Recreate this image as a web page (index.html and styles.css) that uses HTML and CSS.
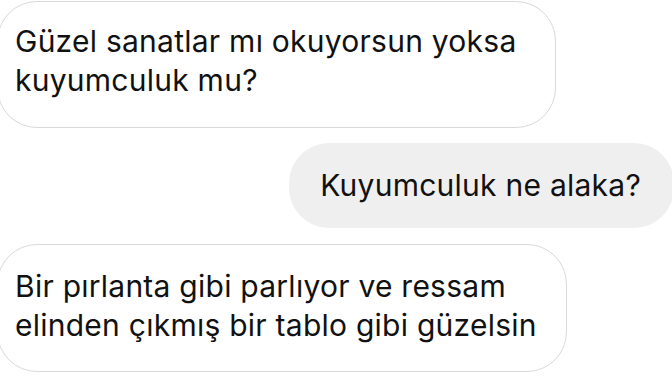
FILE: index.html
```html
<!DOCTYPE html>
<html lang="tr">
<head>
    <meta charset="UTF-8">
    <meta name="viewport" content="width=device-width, initial-scale=1.0">
    <title>Mesajlar</title>
    <link rel="stylesheet" href="styles.css">
</head>
<body>
    <section class="chat">
        <p class="msg in first">Güzel sanatlar mı okuyorsun yoksa<br>kuyumculuk mu?</p>
        <p class="msg out">Kuyumculuk ne alaka?</p>
        <p class="msg in last">Bir pırlanta gibi parlıyor ve ressam<br>elinden çıkmış bir tablo gibi güzelsin</p>
    </section>
</body>
</html>
```

FILE: styles.css
```css
body,html{width: 100%; height: 100%; overflow: hidden;}
body,p{margin: 0; padding: 0;}
body{background:#fff; font-family: Inter, "Liberation Sans", Arial, sans-serif; color:#111;}
.chat{display: flex; flex-direction: column; align-items: flex-start; padding-top:1px;}
.msg{
    width: fit-content; font-size: 30px; line-height: 39px; letter-spacing: 0.25px;
    border-radius: 40px; white-space: nowrap;
}
.msg.in{
    border:1.5px solid #d9d9d9; background:#fff;
    margin-left:-3px; padding:20px 39px 27px 17px;
}
.msg.out{
    align-self: flex-end; margin:15px -2px 0 0;
    background:#efefef; padding:23px 33px 23px 31px;
}
.msg.last{margin-top:16px; padding:22px 29px 26px 17px;}
```
